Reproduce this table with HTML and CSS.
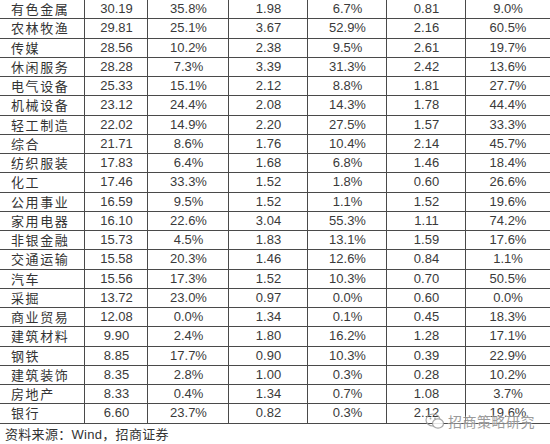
FILE: index.html
```html
<!DOCTYPE html>
<html lang="zh">
<head>
<meta charset="utf-8">
<link rel="stylesheet" href="styles.css">
</head>
<body>
<div class="page">
  <div class="grid">
    <div class="row"><div class="c name">有色金属</div><div class="c">30.19</div><div class="c">35.8%</div><div class="c">1.98</div><div class="c">6.7%</div><div class="c">0.81</div><div class="c">9.0%</div></div>
    <div class="row"><div class="c name">农林牧渔</div><div class="c">29.81</div><div class="c">25.1%</div><div class="c">3.67</div><div class="c">52.9%</div><div class="c">2.16</div><div class="c">60.5%</div></div>
    <div class="row"><div class="c name">传媒</div><div class="c">28.56</div><div class="c">10.2%</div><div class="c">2.38</div><div class="c">9.5%</div><div class="c">2.61</div><div class="c">19.7%</div></div>
    <div class="row"><div class="c name">休闲服务</div><div class="c">28.28</div><div class="c">7.3%</div><div class="c">3.39</div><div class="c">31.3%</div><div class="c">2.42</div><div class="c">13.6%</div></div>
    <div class="row"><div class="c name">电气设备</div><div class="c">25.33</div><div class="c">15.1%</div><div class="c">2.12</div><div class="c">8.8%</div><div class="c">1.81</div><div class="c">27.7%</div></div>
    <div class="row"><div class="c name">机械设备</div><div class="c">23.12</div><div class="c">24.4%</div><div class="c">2.08</div><div class="c">14.3%</div><div class="c">1.78</div><div class="c">44.4%</div></div>
    <div class="row"><div class="c name">轻工制造</div><div class="c">22.02</div><div class="c">14.9%</div><div class="c">2.20</div><div class="c">27.5%</div><div class="c">1.57</div><div class="c">33.3%</div></div>
    <div class="row"><div class="c name">综合</div><div class="c">21.71</div><div class="c">8.6%</div><div class="c">1.76</div><div class="c">10.4%</div><div class="c">2.14</div><div class="c">45.7%</div></div>
    <div class="row"><div class="c name">纺织服装</div><div class="c">17.83</div><div class="c">6.4%</div><div class="c">1.68</div><div class="c">6.8%</div><div class="c">1.46</div><div class="c">18.4%</div></div>
    <div class="row"><div class="c name">化工</div><div class="c">17.46</div><div class="c">33.3%</div><div class="c">1.52</div><div class="c">1.8%</div><div class="c">0.60</div><div class="c">26.6%</div></div>
    <div class="row"><div class="c name">公用事业</div><div class="c">16.59</div><div class="c">9.5%</div><div class="c">1.52</div><div class="c">1.1%</div><div class="c">1.52</div><div class="c">19.6%</div></div>
    <div class="row"><div class="c name">家用电器</div><div class="c">16.10</div><div class="c">22.6%</div><div class="c">3.04</div><div class="c">55.3%</div><div class="c">1.11</div><div class="c">74.2%</div></div>
    <div class="row"><div class="c name">非银金融</div><div class="c">15.73</div><div class="c">4.5%</div><div class="c">1.83</div><div class="c">13.1%</div><div class="c">1.59</div><div class="c">17.6%</div></div>
    <div class="row"><div class="c name">交通运输</div><div class="c">15.58</div><div class="c">20.3%</div><div class="c">1.46</div><div class="c">12.6%</div><div class="c">0.84</div><div class="c">1.1%</div></div>
    <div class="row"><div class="c name">汽车</div><div class="c">15.56</div><div class="c">17.3%</div><div class="c">1.52</div><div class="c">10.3%</div><div class="c">0.70</div><div class="c">50.5%</div></div>
    <div class="row"><div class="c name">采掘</div><div class="c">13.72</div><div class="c">23.0%</div><div class="c">0.97</div><div class="c">0.0%</div><div class="c">0.60</div><div class="c">0.0%</div></div>
    <div class="row"><div class="c name">商业贸易</div><div class="c">12.08</div><div class="c">0.0%</div><div class="c">1.34</div><div class="c">0.1%</div><div class="c">0.45</div><div class="c">18.3%</div></div>
    <div class="row"><div class="c name">建筑材料</div><div class="c">9.90</div><div class="c">2.4%</div><div class="c">1.80</div><div class="c">16.2%</div><div class="c">1.28</div><div class="c">17.1%</div></div>
    <div class="row"><div class="c name">钢铁</div><div class="c">8.85</div><div class="c">17.7%</div><div class="c">0.90</div><div class="c">10.3%</div><div class="c">0.39</div><div class="c">22.9%</div></div>
    <div class="row"><div class="c name">建筑装饰</div><div class="c">8.35</div><div class="c">2.8%</div><div class="c">1.00</div><div class="c">0.3%</div><div class="c">0.28</div><div class="c">10.2%</div></div>
    <div class="row"><div class="c name">房地产</div><div class="c">8.33</div><div class="c">0.4%</div><div class="c">1.34</div><div class="c">0.7%</div><div class="c">1.08</div><div class="c">3.7%</div></div>
    <div class="row"><div class="c name">银行</div><div class="c">6.60</div><div class="c">23.7%</div><div class="c">0.82</div><div class="c">0.3%</div><div class="c">2.12</div><div class="c">19.6%</div></div>
  </div>
  <div class="source">资料来源：Wind，招商证券</div>
  <div class="watermark">
    <svg class="wm-icon" width="20" height="17" viewBox="0 0 20 17">
      <ellipse cx="8" cy="7" rx="7" ry="6" fill="none" stroke="#9a9a9a" stroke-width="1.2"/>
      <ellipse cx="13" cy="10.5" rx="5.5" ry="4.6" fill="#fff" stroke="#9a9a9a" stroke-width="1.2"/>
      <circle cx="5.5" cy="5.5" r="0.9" fill="#9a9a9a"/>
      <circle cx="10" cy="5.5" r="0.9" fill="#9a9a9a"/>
    </svg>
    <span class="wm-text">招商策略研究</span>
  </div>
</div>
</body>
</html>
```

FILE: styles.css
```css
html, body {
  margin: 0;
  padding: 0;
  background: #ffffff;
}

.page {
  position: relative;
  width: 550px;
  height: 444px;
  overflow: hidden;
  font-family: "Liberation Sans", Arial, "Noto Sans CJK SC", sans-serif;
  color: #3a3a3a;
}

.grid {
  display: flex;
  flex-direction: column;
}

.row {
  display: grid;
  grid-template-columns: 85px 63px 81px 79px 79px 79px 84px;
  height: 19.25px;
  box-sizing: border-box;
  border-bottom: 1px solid #4a4a4a;
}

.c {
  display: flex;
  align-items: center;
  justify-content: center;
  font-size: 13px;
  line-height: 1;
  padding-bottom: 1px;
  border-left: 1px solid #4a4a4a;
  box-sizing: border-box;
  margin-left: -1px;
}

.c.name {
  border-left: none;
  margin-left: 0;
  justify-content: flex-start;
  padding-left: 11px;
  font-family: "Noto Sans CJK SC", sans-serif;
  font-size: 13px;
  letter-spacing: 1.6px;
  color: #333333;
}

.source {
  padding-left: 5px;
  height: 20px;
  display: flex;
  align-items: center;
  font-family: "Liberation Sans", "Noto Sans CJK SC", sans-serif;
  font-size: 13px;
  color: #333333;
  letter-spacing: 0.3px;
}

.watermark {
  position: absolute;
  left: 425px;
  top: 411px;
  display: flex;
  align-items: center;
  gap: 3px;
  opacity: 0.85;
}

.wm-text {
  font-family: "Noto Sans CJK SC", sans-serif;
  font-size: 14px;
  color: #8a8a8a;
  letter-spacing: 0.5px;
  text-shadow: 0 0 2px #ffffff, 0 0 1px #ffffff;
}
```
